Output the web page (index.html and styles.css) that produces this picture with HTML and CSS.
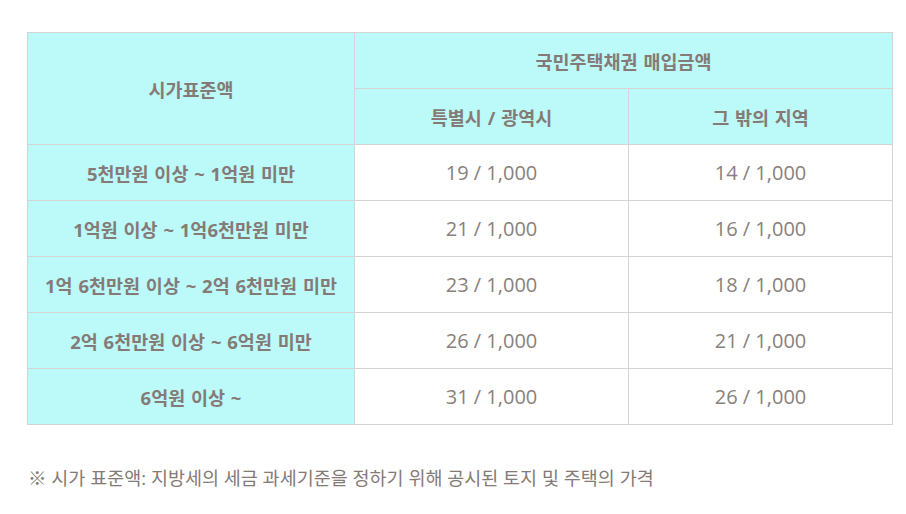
FILE: index.html
```html
<!DOCTYPE html>
<html lang="ko">
<head>
<meta charset="utf-8">
<link rel="stylesheet" href="styles.css">
</head>
<body>
<div class="wrap">
<table class="bond">
<colgroup><col class="c1"><col class="c2"><col class="c3"></colgroup>
<thead>
<tr><th rowspan="2">시가표준액</th><th colspan="2">국민주택채권 매입금액</th></tr>
<tr><th>특별시 / 광역시</th><th>그 밖의 지역</th></tr>
</thead>
<tbody>
<tr><th>5천만원 이상 ~ 1억원 미만</th><td>19 / 1,000</td><td>14 / 1,000</td></tr>
<tr><th>1억원 이상 ~ 1억6천만원 미만</th><td>21 / 1,000</td><td>16 / 1,000</td></tr>
<tr><th>1억 6천만원 이상 ~ 2억 6천만원 미만</th><td>23 / 1,000</td><td>18 / 1,000</td></tr>
<tr><th>2억 6천만원 이상 ~ 6억원 미만</th><td>26 / 1,000</td><td>21 / 1,000</td></tr>
<tr><th>6억원 이상 ~</th><td>31 / 1,000</td><td>26 / 1,000</td></tr>
</tbody>
</table>
<p class="note">※ 시가 표준액: 지방세의 세금 과세기준을 정하기 위해 공시된 토지 및 주택의 가격</p>
</div>
</body>
</html>
```
FILE: styles.css
```css
html, body { margin: 0; padding: 0; background: #fff; }
body { font-family: "Open Sans", "Noto Sans CJK KR", sans-serif; color: #857a76; }
.wrap { padding: 32px 14px 0 27px; }
.bond { border-collapse: collapse; width: 865px; table-layout: fixed; }
.c1 { width: 327px; }
.c2 { width: 274px; }
.c3 { width: 264px; }
.bond th, .bond td { border: 1px solid #d4d4d4; height: 55px; padding: 0; text-align: center; vertical-align: middle; }
.bond th { background: #bbfaf9; font-size: 18.5px; font-weight: 700; color: #857a76; word-spacing: 1px; }
.bond td { font-size: 20px; font-weight: 400; color: #8a807c; }
.note { margin: 39px 0 0 1px; font-size: 18.5px; color: #857a76; }
```
